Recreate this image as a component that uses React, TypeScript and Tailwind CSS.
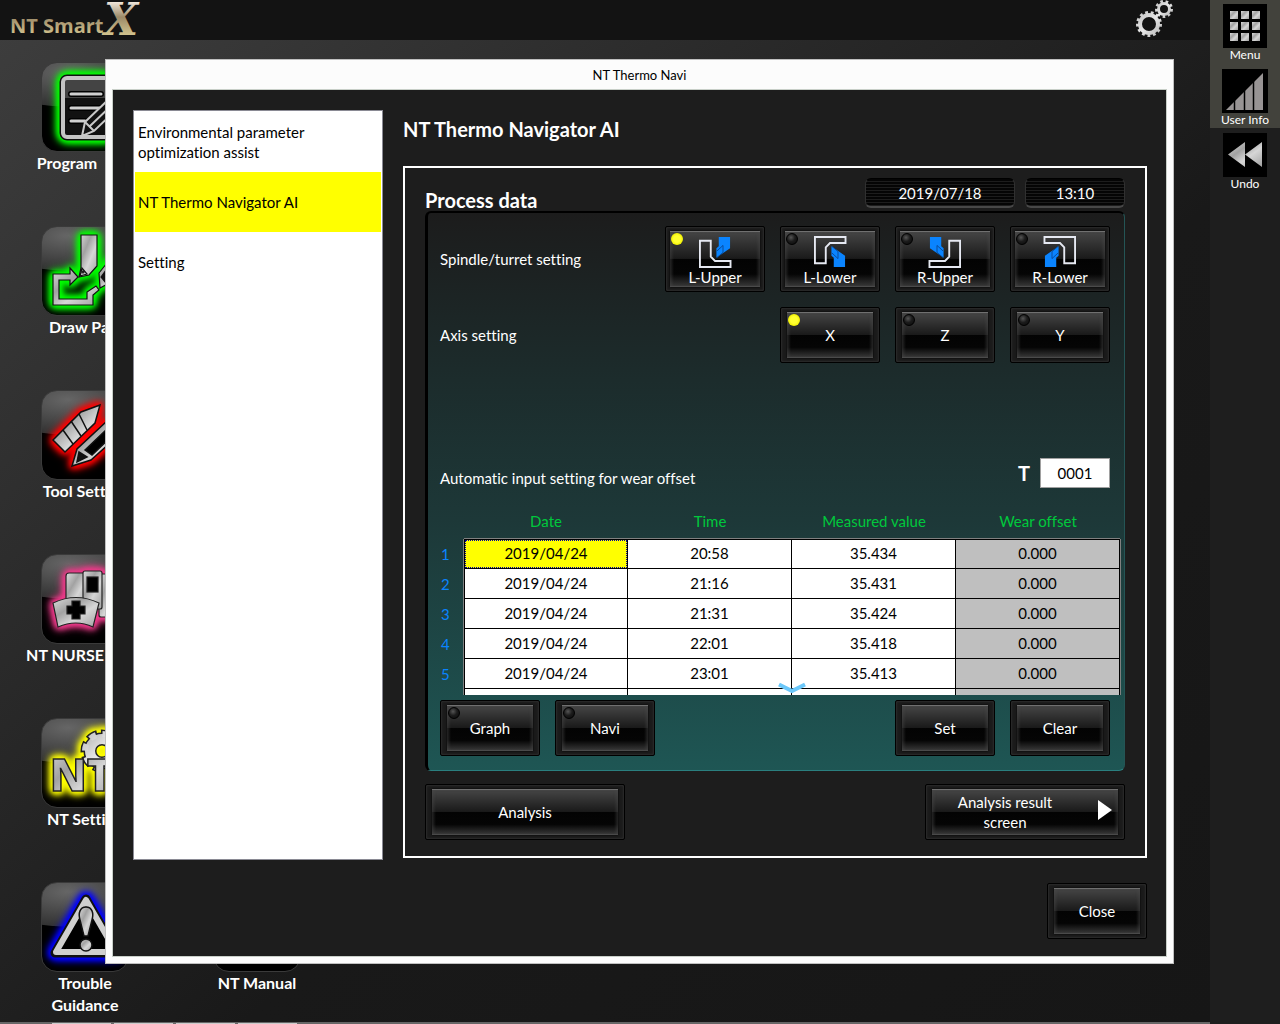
import { useState, type ReactNode } from 'react';

const MENU = ['Environmental parameter optimization assist', 'NT Thermo Navigator AI', 'Setting'];

const ROWS = [
  ['2019/04/24', '20:58', '35.434', '0.000'],
  ['2019/04/24', '21:16', '35.431', '0.000'],
  ['2019/04/24', '21:31', '35.424', '0.000'],
  ['2019/04/24', '22:01', '35.418', '0.000'],
  ['2019/04/24', '23:01', '35.413', '0.000'],
  ['', '', '', ''],
];

const TURRETS = [
  { name: 'L-Upper', flip: undefined },
  { name: 'L-Lower', flip: 'translate(0 34) scale(1 -1)' },
  { name: 'R-Upper', flip: 'translate(34 0) scale(-1 1)' },
  { name: 'R-Lower', flip: 'translate(34 34) scale(-1 -1)' },
];

function Led({ on }: { on: boolean }) {
  return (
    <span
      className={
        on
          ? 'absolute left-px top-px h-3 w-3 rounded-full bg-[radial-gradient(circle,#ffff30_40%,#f0f000_70%,#8a8a00)]'
          : 'absolute left-px top-px h-3 w-3 rounded-full border border-black bg-[radial-gradient(circle_at_40%_35%,#555,#1c1c1c_45%,#080808)]'
      }
    />
  );
}

type PushButtonProps = {
  children: ReactNode;
  size: string;
  frame?: string;
  led?: boolean;
  onClick?: () => void;
};

function PushButton({ children, size, frame = 'px-[6px] py-[4px]', led, onClick }: PushButtonProps) {
  return (
    <button
      type="button"
      aria-pressed={led}
      onClick={onClick}
      className={`${size} ${frame} flex shrink-0 rounded-xs border border-black bg-[#1b1b1b] text-[15px] leading-5 text-white shadow-[inset_0_0_2px_1px_#2c2c2c]`}
    >
      <span className="relative flex h-full w-full flex-col items-center justify-center border-b border-t border-b-[#4a4a4a] border-t-[#707070] bg-[linear-gradient(#454545,#1a1a1a_49%,#030303_50%,#050505_78%,#363636)] shadow-[inset_3px_0_3px_-1px_#4a4a4a80,inset_-3px_0_3px_-1px_#4a4a4a80,0_0_2px_#000]">
        {led !== undefined && <Led on={led} />}
        {children}
      </span>
    </button>
  );
}

function TurretIcon({ flip }: { flip?: string }) {
  return (
    <svg width="34" height="34" viewBox="0 0 34 34" className="mt-1">
      <g transform={flip}>
        <path d="M1 5H12.500V22L17 26.500H33.500V33H1Z" fill="none" stroke="#e6e9f2" strokeWidth="2" />
        <path d="M21 1H33V13L18.500 23V13L21 11Z" fill="#0a84ff" />
        <path d="M19 16 25.500 10V17.500L19 23" fill="none" stroke="#0a4a98" />
      </g>
    </svg>
  );
}

type GearProps = { cx: number; cy: number; r: number; teeth: number; hole: number; depth?: number; outline?: boolean };

function Gear({ cx, cy, r, teeth, hole, depth = 2, outline }: GearProps) {
  const body = r - depth;
  const ring = (body + hole) / 2;
  const tooth = (Math.PI * body) / teeth;
  return (
    <g fill="none">
      {outline && (
        <g stroke="#222">
          <circle cx={cx} cy={cy} r={ring} strokeWidth={body - hole + 3} />
          <circle
            cx={cx}
            cy={cy}
            r={body}
            strokeWidth={depth * 2 + 3}
            strokeDasharray={`${tooth + 3} ${tooth - 3}`}
            strokeDashoffset="1.500"
          />
        </g>
      )}
      <g stroke="url(#bright)">
        <circle cx={cx} cy={cy} r={ring} strokeWidth={body - hole} />
        <circle cx={cx} cy={cy} r={body} strokeWidth={depth * 2} strokeDasharray={tooth} />
      </g>
    </g>
  );
}

function Metals() {
  return (
    <defs>
      <linearGradient id="silver" x1="0" y1="0" x2="1" y2="1">
        <stop offset="0" stopColor="#dcdcdc" />
        <stop offset="0.350" stopColor="#a2a2a2" />
        <stop offset="0.600" stopColor="#d6d6d6" />
        <stop offset="1" stopColor="#a0a0a0" />
      </linearGradient>
      <linearGradient id="bright" x1="0" y1="0" x2="1" y2="1">
        <stop offset="0" stopColor="#c4c4c4" />
        <stop offset="0.500" stopColor="#e8e8e8" />
        <stop offset="1" stopColor="#bcbcbc" />
      </linearGradient>
    </defs>
  );
}

function Logo() {
  return (
    <svg width="150" height="40" viewBox="0 0 150 40" role="img" aria-label="NT Smart X">
      <defs>
        <linearGradient id="gold" gradientUnits="userSpaceOnUse" x1="0" y1="0" x2="0" y2="38">
          <stop offset="0" stopColor="#fbf3ea" />
          <stop offset="0.450" stopColor="#9c8a68" />
          <stop offset="0.900" stopColor="#cfc08c" />
        </linearGradient>
      </defs>
      <g fill="url(#gold)" fontWeight="700">
        <text x="10" y="33" fontFamily="'Open Sans', sans-serif" fontSize="20">
          NT Smart
        </text>
        <text x="104" y="35" fontFamily="'DejaVu Serif', serif" fontSize="44" fontStyle="italic">
          X
        </text>
      </g>
    </svg>
  );
}

const programArt = (
  <>
    <rect x="22" y="16" width="46" height="59" rx="4" fill="#111" stroke="#111" strokeWidth="7" />
    <path d="M24 18H68V36H24Z" fill="#444" />
    <rect x="22" y="16" width="46" height="59" rx="4" fill="none" stroke="#c4c4c4" strokeWidth="4" />
    <path d="M30 32H60M30 46H60M30 59H44" stroke="#000" strokeWidth="6" strokeLinecap="round" />
    <path d="M30 32H60M30 46H60M30 59H44" stroke="#d0d0d0" strokeWidth="3" strokeLinecap="round" />
    <path d="M41 74 44 60 68 37 77 46 53 69Z" fill="#111" stroke="#c8c8c8" strokeWidth="2" />
    <path d="M44 60 53 69M49 64 72 42" stroke="#c8c8c8" strokeWidth="2" />
  </>
);

const drawArt = (
  <g fill="url(#silver)" stroke="#111" strokeWidth="1.200">
    <path d="M40 9H56V40L48 49 38 51 40 42Z" />
    <path d="M41 42 39 50 46 48Z" />
    <circle cx="42" cy="46" r="1" />
    <path d="M29 42 37 51 29 59V54H18V73H46V66L55 60 58 64 52 69V79H12V48H29Z" />
    <path d="M58 47 70 32 82 42 70 56 59 62Z" />
    <path d="M60 51 65 44V57Z" fill="#111" />
  </g>
);

const toolArt = (
  <g fill="url(#silver)" stroke="#111" strokeWidth="1.500">
    <path d="M12 50 40 22 59 15 54 33 24 62Z" />
    <path d="M22 40 32 54M30 31 40 46M38 24 46 40" fill="none" />
    <path d="M31 76 36 59 66 31 80 43 50 70Z" />
    <path d="M44 60 66 39 72 45 51 65Z" fill="#000" />
    <path d="M36 72 38 62 46 67Z" fill="#111" />
  </g>
);

const nurseArt = (
  <g fill="url(#silver)" stroke="#222" strokeWidth="1.200">
    <rect x="58" y="20" width="18" height="43" rx="2" />
    <rect x="25" y="19" width="20" height="34" rx="3" />
    <rect x="42" y="17" width="19" height="38" rx="2" />
    <rect x="46" y="23" width="11" height="15" fill="#000" />
    <path d="M12 49Q35 38 58 49L52 73Q35 65 17 73Z" />
    <path d="M31 47H39V52H44V60H39V65H31V60H26V52H31Z" fill="#000" />
  </g>
);

const settingArt = (
  <>
    <Gear cx={61} cy={33} r={20} teeth={8} hole={7} depth={3} outline />
    <text
      x="9"
      y="73"
      fontFamily="'Open Sans', sans-serif"
      fontSize="44"
      fontWeight="800"
      fill="url(#silver)"
      stroke="#222"
      strokeWidth="1.500"
    >
      NT
    </text>
  </>
);

const troubleArt = (
  <>
    <path d="M45 17 76 71H14Z" fill="#000" stroke="#111" strokeWidth="9" strokeLinejoin="round" />
    <path d="M45 18 75 70H15Z" fill="#000" stroke="#cfcfcf" strokeWidth="6" strokeLinejoin="round" />
    <g fill="url(#silver)" stroke="#111" strokeWidth="1.500">
      <path d="M45 25C51 25 53 31 51 38L47 54H43L39 38C37 31 39 25 45 25Z" />
      <circle cx="45" cy="63" r="6" />
    </g>
  </>
);

const LAUNCHERS = [
  { label: 'Program', pad: 'pr-9', glow: 'drop-shadow-[0_0_3px_#00ff00]', art: programArt },
  { label: 'Draw Part', pad: '', glow: 'drop-shadow-[0_0_3px_#00ff00]', art: drawArt },
  { label: 'Tool Setting', pad: '', glow: 'drop-shadow-[0_0_3px_#ff0000]', art: toolArt },
  { label: 'NT NURSE', pad: 'pr-10', glow: 'drop-shadow-[0_0_3px_#f03a8b]', art: nurseArt },
  { label: 'NT Setting', pad: '', glow: 'drop-shadow-[0_0_3px_#ffff00]', art: settingArt },
  { label: 'Trouble Guidance', pad: 'px-10', glow: 'drop-shadow-[0_0_3px_#0000ff]', art: troubleArt },
  { label: 'NT Manual', pad: '', glow: '', art: null },
];

function Desktop() {
  return (
    <nav className="grid grid-cols-[170px_170px] gap-x-0.5 gap-y-6 pt-[22px]">
      {LAUNCHERS.map((item) => (
        <button
          key={item.label}
          type="button"
          className={`flex min-h-[140px] flex-col items-center ${item.label === 'NT Manual' ? 'col-start-2' : 'col-start-1'}`}
        >
          <span className="block overflow-hidden rounded-2xl border border-[#3a3a3a] bg-[radial-gradient(ellipse_120%_50%_at_30%_10%,#666,#333_78%,#000_80%)]">
            <svg width="86" height="88" viewBox="1 1 86 88">
              <g className={item.glow}>
                <g className={item.glow}>
                  <g className={item.glow}>{item.art}</g>
                </g>
              </g>
            </svg>
          </span>
          <span className={`text-[16px] font-bold leading-[22px] text-white ${item.pad}`}>{item.label}</span>
        </button>
      ))}
    </nav>
  );
}

function Sidebar() {
  return (
    <aside className="flex w-[70px] shrink-0 flex-col bg-[#1e1e1e] text-[12px] leading-[14px] text-white">
      <div className="flex flex-col items-center bg-[#42423c] pt-1">
        <button type="button" className="flex flex-col items-center">
          <svg width="44" height="44" viewBox="0 0 44 44" className="bg-black">
            <g fill="url(#silver)">
              {[7, 18, 29].map((y) => [7, 18, 29].map((x) => <rect key={`${x}-${y}`} x={x} y={y} width="8" height="8" />))}
            </g>
          </svg>
          Menu
        </button>
        <button type="button" className="mt-[7px] flex flex-col items-center pb-px">
          <svg width="46" height="44" viewBox="0 0 46 44" className="bg-black">
            <path d="M4 41 41 4V41Z" fill="#989494" />
            <path d="M12.500 44V30M22.500 44V18M31.500 44V10" stroke="#000" strokeWidth="1.500" />
          </svg>
          User Info
        </button>
      </div>
      <button type="button" className="mt-[5px] flex flex-col items-center">
        <svg width="44" height="44" viewBox="0 0 44 44" className="bg-black">
          <path d="M22 9V34L5 21.500ZM39 9V34L22 21.500Z" fill="url(#silver)" />
        </svg>
        Undo
      </button>
    </aside>
  );
}

function MeasureTable() {
  return (
    <div className="relative mt-[18px] -mr-[11px] h-[189px] overflow-hidden pr-px">
      <table className="w-full table-fixed border-separate border-spacing-0 text-center text-[15px] leading-5">
        <thead>
          <tr className="h-[33px] text-[#00c83c]">
            <td className="w-6" />
            {['Date', 'Time', 'Measured value', 'Wear offset'].map((h) => (
              <th key={h} className="border-b border-[#808080] p-0 pb-0.5 font-normal">
                {h}
              </th>
            ))}
          </tr>
        </thead>
        <tbody>
          {ROWS.map((row, i) => (
            <tr key={i} className="h-[30px]">
              <th className="border-r border-[#808080] p-0 pl-px text-left font-normal text-[#0a84ff]">
                {i < 5 ? i + 1 : ''}
              </th>
              {row.map((cell, j) => (
                <td
                  key={j}
                  className={[
                    'border-b border-r border-black p-0 pb-0.5 text-black',
                    i === 0 ? 'border-t' : '',
                    j === 0 ? 'border-l' : '',
                    j === 3 ? 'bg-[#bfbfbf] shadow-[1px_0_#808080]' : i === 0 && j === 0 ? 'bg-[#ffff00]' : 'bg-white',
                    i === 0 && j === 0 ? 'outline-1 -outline-offset-2 outline-dotted outline-[#0000a0]' : '',
                  ].join(' ')}
                >
                  {cell}
                </td>
              ))}
            </tr>
          ))}
        </tbody>
      </table>
      <svg width="28" height="12" viewBox="0 0 28 12" className="absolute bottom-px left-1/2 ml-[-3px]">
        <path d="M1 2.500 14 9 27 2.500" fill="none" stroke="#6cc8fa" strokeWidth="4" />
      </svg>
    </div>
  );
}

function ProcessData() {
  const [turret, setTurret] = useState('L-Upper');
  const [axis, setAxis] = useState('X');
  const readout =
    'flex h-[30px] items-center justify-center rounded-md border border-t-black border-x-[#303030] border-b-2 border-b-[#484848] bg-[repeating-linear-gradient(#050505_0_2px,#1d1d1d_2px_3px)] text-[15px] pt-0.5';

  return (
    <section className="border-2 border-white px-5 pb-4 pt-2.5 text-white">
      <div className="flex h-[33px] gap-2.5">
        <h2 className="mr-auto self-end text-[20px] font-bold leading-[22px]">Process data</h2>
        <div className={`w-[150px] ${readout}`}>2019/07/18</div>
        <div className={`w-[100px] ${readout}`}>13:10</div>
      </div>

      <div className="rounded-md border-b border-l-[3px] border-r border-t-2 border-b-[#2a7f7f] border-l-black border-r-[#245555] border-t-black bg-[linear-gradient(#1c1c1c,#1c2c2c_30%,#1d3838_55%,#1e5654)] pb-[14px] pl-3 pr-[14px] pt-[13px] text-[15px] leading-5">
        <div className="flex items-center justify-between">
          <span>Spindle/turret setting</span>
          <div className="flex gap-[15px]">
            {TURRETS.map((t) => (
              <PushButton
                key={t.name}
                size="h-[66px] w-[100px]"
                frame="p-1"
                led={turret === t.name}
                onClick={() => setTurret(t.name)}
              >
                <TurretIcon flip={t.flip} />
                <span className="leading-[18px]">{t.name}</span>
              </PushButton>
            ))}
          </div>
        </div>

        <div className="mt-[15px] flex items-center justify-between">
          <span>Axis setting</span>
          <div className="flex gap-[15px]">
            {['X', 'Z', 'Y'].map((a) => (
              <PushButton key={a} size="h-[56px] w-[100px]" led={axis === a} onClick={() => setAxis(a)}>
                {a}
              </PushButton>
            ))}
          </div>
        </div>

        <div className="mt-[95px] flex items-end justify-between">
          <span>Automatic input setting for wear offset</span>
          <label className="flex items-center gap-2.5 text-[20px] font-bold">
            T
            <input
              defaultValue="0001"
              className="h-[30px] w-[70px] border border-[#a0a0a0] bg-white text-center text-[15px] font-normal text-black"
            />
          </label>
        </div>

        <MeasureTable />

        <div className="mt-[5px] flex gap-[15px]">
          <PushButton size="h-[56px] w-[100px]" led={false}>
            Graph
          </PushButton>
          <PushButton size="mr-auto h-[56px] w-[100px]" led={false}>
            Navi
          </PushButton>
          <PushButton size="h-[56px] w-[100px]">Set</PushButton>
          <PushButton size="h-[56px] w-[100px]">Clear</PushButton>
        </div>
      </div>

      <div className="mt-[13px] flex justify-between">
        <PushButton size="h-[56px] w-[200px]">Analysis</PushButton>
        <PushButton size="h-[56px] w-[200px]">
          <span className="flex w-full items-center pr-1.5">
            <span className="flex-1 pl-3 pr-8">Analysis result screen</span>
            <svg width="14" height="20" viewBox="0 0 14 20" className="mb-1">
              <path d="M0 0 14 10 0 20Z" fill="#fff" />
            </svg>
          </span>
        </PushButton>
      </div>
    </section>
  );
}

function ThermoDialog() {
  const [current, setCurrent] = useState(1);

  return (
    <div
      role="dialog"
      aria-label="NT Thermo Navi"
      className="absolute left-[105px] right-9 top-[59px] border border-[#c0c0c0] bg-[#fcfcfc] px-1.5 pb-1.5"
    >
      <div className="h-[29px] text-center text-[13px] leading-[30px] text-black">NT Thermo Navi</div>
      <div className="border border-[#c8cfc8] bg-[#1d1d1d] pb-[17px] pl-5 pr-[19px] pt-5">
        <div className="flex gap-5">
          <ul className="w-[250px] shrink-0 border border-[#8a8a94] bg-white p-px">
            {MENU.map((label, i) => (
              <li key={label}>
                <button
                  type="button"
                  onClick={() => setCurrent(i)}
                  className={`flex h-[60px] w-full items-center pl-[3px] pr-12 text-left text-[15px] leading-5 text-black ${
                    i === current ? 'bg-[#ffff00]' : ''
                  }`}
                >
                  {label}
                </button>
              </li>
            ))}
          </ul>
          <div className="flex-1 pb-0.5">
            <h1 className="mb-[18px] text-[20px] font-bold leading-[38px] text-white">NT Thermo Navigator AI</h1>
            <ProcessData />
          </div>
        </div>
        <div className="mt-[23px] flex justify-end">
          <PushButton size="h-[56px] w-[100px]">Close</PushButton>
        </div>
      </div>
    </div>
  );
}

export default function App() {
  return (
    <div className="flex min-h-screen bg-[#171717] font-['Lato','Open_Sans',sans-serif] [font-variant-ligatures:none]">
      <div className="relative flex min-w-0 flex-1 flex-col bg-[linear-gradient(to_bottom_right,#3e3e3e,#191919_60%,#161616)]">
        <header className="flex h-10 items-center justify-between bg-[#131313] pr-9">
          <Logo />
          <svg width="40" height="40" viewBox="0 0 40 40">
            <Metals />
            <Gear cx={15} cy={24} r={13} teeth={13} hole={7} />
            <Gear cx={30} cy={9} r={9} teeth={9} hole={4} />
          </svg>
        </header>
        <Desktop />
        <footer className="mt-auto flex h-0.5 gap-[3px] bg-[#666] pl-[52px] pt-px">
          {[0, 1, 2, 3].map((n) => (
            <span key={n} className="w-[59px] bg-[#ccc]" />
          ))}
        </footer>
        <ThermoDialog />
      </div>
      <Sidebar />
    </div>
  );
}
